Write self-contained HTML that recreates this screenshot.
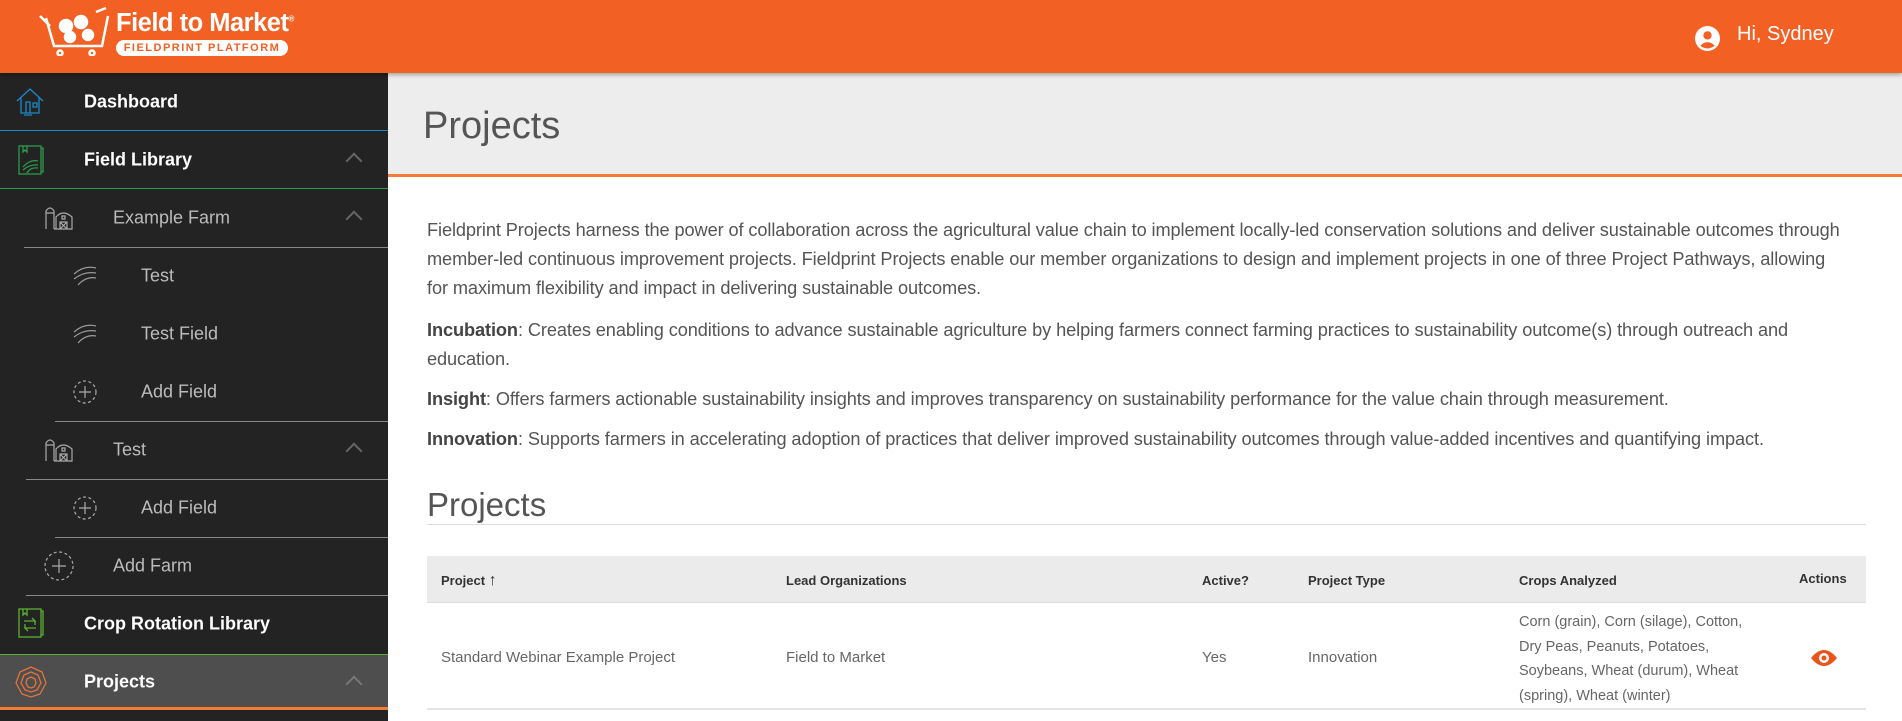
<!DOCTYPE html>
<html><head><meta charset="utf-8"><style>
*{box-sizing:border-box;margin:0;padding:0}
body{width:1902px;height:721px;overflow:hidden;font-family:"Liberation Sans",sans-serif;background:#fff;position:relative}
.hdr{position:absolute;left:0;top:0;width:1902px;height:73px;background:#f26024;box-shadow:0 2px 4px rgba(0,0,0,.3);z-index:2}
.side{position:absolute;left:0;top:73px;width:388px;height:648px;background:#232323}
.row{position:absolute;left:0;width:388px;height:58px;color:#fff;font-size:18px;font-weight:bold}
.row span{position:absolute;top:50%;transform:translateY(-50%);white-space:nowrap}
.sub{color:#bbb;font-weight:normal;font-size:18px}
.line{position:absolute;height:1px;background:#888;right:0}
.chev{position:absolute;right:28px;top:24px;width:12px;height:12px;border-left:2px solid #666;border-top:2px solid #666;transform:rotate(45deg)}
.ic{position:absolute}
.main{position:absolute;left:388px;top:73px;right:0;bottom:0}
.band{position:absolute;left:0;right:0;top:0;height:104px;background:#ededed;border-bottom:3px solid #f47b33}
.band h1{position:absolute;left:35px;top:32px;font-size:38px;font-weight:normal;color:#555}
.txt{position:absolute;left:39px;width:1440px;font-size:18.2px;color:#555;line-height:29px;white-space:nowrap;letter-spacing:-0.1px}
.txt b{color:#444}
h2{position:absolute;left:39px;top:413px;font-size:33px;font-weight:normal;color:#555}
.hr{position:absolute;left:39px;top:451px;width:1439px;height:1px;background:#ddd}
.th{position:absolute;top:483px;left:39px;width:1439px;height:47px;background:#ebebeb;border-bottom:1px solid #ddd}
.tr{position:absolute;top:530px;left:39px;width:1439px;height:107px;border-bottom:2px solid #e4e4e4}
.c{position:absolute;font-size:13px;color:#333;font-weight:bold;white-space:nowrap}
.d{position:absolute;font-size:15px;color:#666;white-space:nowrap}
</style></head><body>
<div class="hdr">
 <svg class="ic" style="left:36px;top:6px" width="80" height="50" viewBox="0 0 80 50" fill="none" stroke="#fff" stroke-width="2.5">
  <path d="M4 10 L14 20 M10 12 L18 40 L66 40 L72 10"/><circle cx="30" cy="20" r="6" fill="#fff"/><circle cx="45" cy="16" r="6" fill="#fff"/><circle cx="34" cy="31" r="5" fill="#fff"/><circle cx="52" cy="29" r="5" fill="#fff"/><path d="M60 6 L70 2"/><circle cx="24" cy="47" r="2.5"/><circle cx="56" cy="47" r="2.5"/>
 </svg>
 <div style="position:absolute;left:116px;top:9px;color:#fff;font-size:25.5px;font-weight:bold;white-space:nowrap;letter-spacing:-0.5px">Field to Market<sup style="font-size:8px">®</sup></div>
 <div style="position:absolute;left:116px;top:40px;width:172px;height:16px;background:#fff;border-radius:8px;color:#f26024;font-size:11px;font-weight:bold;text-align:center;line-height:16px;letter-spacing:1.5px">FIELDPRINT PLATFORM</div>
 <svg class="ic" style="left:1695px;top:26px" width="25" height="25" viewBox="0 0 24 24"><circle cx="12" cy="12" r="12" fill="#fff"/><circle cx="12" cy="9" r="4" fill="#f26024"/><path d="M5 19 Q12 12 19 19 Q12 24 5 19Z" fill="#f26024"/></svg>
 <div style="position:absolute;left:1737px;top:23px;color:#fff;font-size:20px">Hi, Sydney</div>
</div>
<div class="side">
 <div class="row" style="top:0"><svg class="ic" style="left:16px;top:14px" width="28" height="30" viewBox="0 0 28 30" fill="none" stroke="#1a8ac8" stroke-width="1.3"><path d="M1 14 L14 2 L27 14 M5 11 V26 H23 V11 M10 26 V15 H14 V26 M17 16 H21 V20 H17Z M8 28 H16"/></svg><span style="left:84px">Dashboard</span></div>
 <div class="line" style="top:57px;left:0;background:#1a8ac8"></div>
 <div class="row" style="top:58px"><svg class="ic" style="left:18px;top:14px" width="26" height="30" viewBox="0 0 26 30" fill="none" stroke="#2e9a4a" stroke-width="1.3"><rect x="1" y="1" width="22" height="28"/><path d="M23 3 H25 V27 H23 M5 1 V7 L7 5 L9 7 V1 M5 22 Q12 14 20 16 M5 25 Q12 19 20 20 M9 28 Q12 22 20 23"/></svg><span style="left:84px">Field Library</span><div class="chev"></div></div>
 <div class="line" style="top:115px;left:0;background:#2e9a4a"></div>
 <div class="row sub" style="top:116px"><svg class="ic" style="left:44px;top:16px" width="30" height="26" viewBox="0 0 30 26" fill="none" stroke="#aaa" stroke-width="1.2"><path d="M2 24 V6 Q6 0 10 6 V24 M2 8 H10 M10 24 H28 V12 Q19 4 12 12 V24 M16 24 V17 H23 V24 M16 17 L23 24 M23 17 L16 24 M18 11 H21 V14 H18Z"/></svg><span style="left:113px">Example Farm</span><div class="chev"></div></div>
 <div class="line" style="top:174px;left:24px"></div>
 <div class="row sub" style="top:174px"><svg class="ic" style="left:72px;top:19px" width="26" height="20" viewBox="0 0 26 20" fill="none" stroke="#999" stroke-width="1.2"><path d="M2 8 Q12 -1 24 2 M2 13 Q12 5 24 7 M6 19 Q14 10 24 12"/></svg><span style="left:141px">Test</span></div>
 <div class="row sub" style="top:232px"><svg class="ic" style="left:72px;top:19px" width="26" height="20" viewBox="0 0 26 20" fill="none" stroke="#999" stroke-width="1.2"><path d="M2 8 Q12 -1 24 2 M2 13 Q12 5 24 7 M6 19 Q14 10 24 12"/></svg><span style="left:141px">Test Field</span></div>
 <div class="row sub" style="top:290px"><svg class="ic" style="left:73px;top:17px" width="24" height="24" viewBox="0 0 24 24" fill="none" stroke="#aaa" stroke-width="1.2"><circle cx="12" cy="12" r="11" stroke-dasharray="3 2.5"/><path d="M12 6 V18 M6 12 H18"/></svg><span style="left:141px">Add Field</span></div>
 <div class="line" style="top:348px;left:55px"></div>
 <div class="row sub" style="top:348px"><svg class="ic" style="left:44px;top:16px" width="30" height="26" viewBox="0 0 30 26" fill="none" stroke="#aaa" stroke-width="1.2"><path d="M2 24 V6 Q6 0 10 6 V24 M2 8 H10 M10 24 H28 V12 Q19 4 12 12 V24 M16 24 V17 H23 V24 M16 17 L23 24 M23 17 L16 24 M18 11 H21 V14 H18Z"/></svg><span style="left:113px">Test</span><div class="chev"></div></div>
 <div class="line" style="top:406px;left:26px"></div>
 <div class="row sub" style="top:406px"><svg class="ic" style="left:73px;top:17px" width="24" height="24" viewBox="0 0 24 24" fill="none" stroke="#aaa" stroke-width="1.2"><circle cx="12" cy="12" r="11" stroke-dasharray="3 2.5"/><path d="M12 6 V18 M6 12 H18"/></svg><span style="left:141px">Add Field</span></div>
 <div class="line" style="top:464px;left:55px"></div>
 <div class="row sub" style="top:464px"><svg class="ic" style="left:44px;top:14px" width="30" height="30" viewBox="0 0 30 30" fill="none" stroke="#aaa" stroke-width="1.2"><circle cx="15" cy="15" r="14" stroke-dasharray="3 2.5"/><path d="M15 8 V22 M8 15 H22"/></svg><span style="left:113px">Add Farm</span></div>
 <div class="line" style="top:522px;left:26px"></div>
 <div class="row" style="top:522px"><svg class="ic" style="left:18px;top:13px" width="26" height="30" viewBox="0 0 26 30" fill="none" stroke="#5ab030" stroke-width="1.3"><rect x="1" y="1" width="22" height="28"/><path d="M23 3 H25 V27 H23 M5 1 V7 L7 5 L9 7 V1 M6 13 H17 L14 10 M18 20 H7 L10 23 M17 13 V17 M7 20 V16"/></svg><span style="left:84px">Crop Rotation Library</span></div>
 <div style="position:absolute;left:0;top:581px;width:388px;height:56px;background:#4e4e4e;border-top:1px solid #5ab030;border-bottom:3px solid #f47b33"></div>
 <div class="row" style="top:581px;height:56px"><svg class="ic" style="left:15px;top:12px" width="32" height="32" viewBox="0 0 32 32" fill="none" stroke="#e0763a" stroke-width="1.3"><polygon points="16,1 27,6 31,17 25,28 16,31 7,28 1,17 5,6"/><polygon points="16,6 23,9 26,17 22,24 16,26 10,24 6,17 9,9"/><polygon points="16,11 20,13 21,17 19,21 16,22 13,21 11,17 12,13"/></svg><span style="left:84px">Projects</span><div class="chev" style="top:24px;border-color:#777"></div></div>
</div>
<div class="main">
 <div class="band"><h1>Projects</h1></div>
 <div class="txt" style="top:143px">Fieldprint Projects harness the power of collaboration across the agricultural value chain to implement locally-led conservation solutions and deliver sustainable outcomes through<br>member-led continuous improvement projects. Fieldprint Projects enable our member organizations to design and implement projects in one of three Project Pathways, allowing<br>for maximum flexibility and impact in delivering sustainable outcomes.</div>
 <div class="txt" style="top:243px"><b>Incubation</b>: Creates enabling conditions to advance sustainable agriculture by helping farmers connect farming practices to sustainability outcome(s) through outreach and<br>education.</div>
 <div class="txt" style="top:312px"><b>Insight</b>: Offers farmers actionable sustainability insights and improves transparency on sustainability performance for the value chain through measurement.</div>
 <div class="txt" style="top:352px"><b>Innovation</b>: Supports farmers in accelerating adoption of practices that deliver improved sustainability outcomes through value-added incentives and quantifying impact.</div>
 <h2>Projects</h2>
 <div class="hr"></div>
 <div class="th">
  <div class="c" style="left:14px;top:16px">Project <span style="font-weight:normal;font-size:16px">&#8593;</span></div>
  <div class="c" style="left:359px;top:17px">Lead Organizations</div>
  <div class="c" style="left:775px;top:17px">Active?</div>
  <div class="c" style="left:881px;top:17px">Project Type</div>
  <div class="c" style="left:1092px;top:17px">Crops Analyzed</div>
  <div class="c" style="left:1372px;top:15px">Actions</div>
 </div>
 <div class="tr">
  <div class="d" style="left:14px;top:46px">Standard Webinar Example Project</div>
  <div class="d" style="left:359px;top:46px">Field to Market</div>
  <div class="d" style="left:775px;top:46px">Yes</div>
  <div class="d" style="left:881px;top:46px">Innovation</div>
  <div class="d" style="left:1092px;top:7px;line-height:24.5px;font-size:14.5px">Corn (grain), Corn (silage), Cotton,<br>Dry Peas, Peanuts, Potatoes,<br>Soybeans, Wheat (durum), Wheat<br>(spring), Wheat (winter)</div>
  <svg class="ic" style="left:1383px;top:45px" width="28" height="20" viewBox="0 0 28 20"><path d="M1 10 Q14 -6 27 10 Q14 26 1 10Z" fill="#e8541c"/><circle cx="14" cy="10" r="5" fill="#fff"/><circle cx="14" cy="10" r="2.5" fill="#e8541c"/></svg>
 </div>
</div>
</body></html>
